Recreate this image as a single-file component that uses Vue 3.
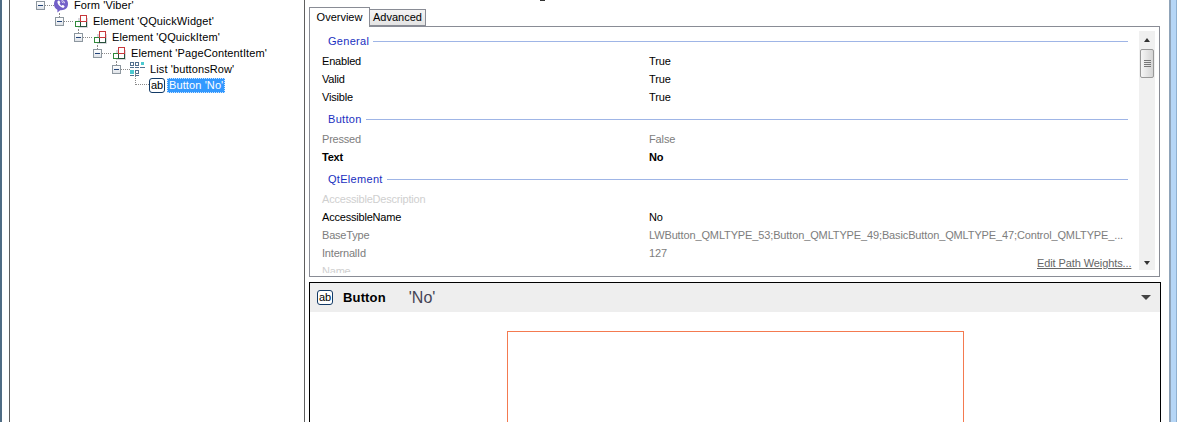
<script setup>
const treeRows = [
  { label: "Form 'Viber'", icon: 'viber', level: 0 },
  { label: "Element 'QQuickWidget'", icon: 'element', level: 1 },
  { label: "Element 'QQuickItem'", icon: 'element', level: 2 },
  { label: "Element 'PageContentItem'", icon: 'element', level: 3 },
  { label: "List 'buttonsRow'", icon: 'list', level: 4 },
  { label: "Button 'No'", icon: 'ab', level: 5, selected: true },
]
const sections = [
  {
    title: 'General',
    rows: [
      { name: 'Enabled', value: 'True' },
      { name: 'Valid', value: 'True' },
      { name: 'Visible', value: 'True' },
    ],
  },
  {
    title: 'Button',
    rows: [
      { name: 'Pressed', value: 'False', tone: 'muted' },
      { name: 'Text', value: 'No', tone: 'strong' },
    ],
  },
  {
    title: 'QtElement',
    rows: [
      { name: 'AccessibleDescription', value: '', tone: 'faint' },
      { name: 'AccessibleName', value: 'No' },
      { name: 'BaseType', value: 'LWButton_QMLTYPE_53;Button_QMLTYPE_49;BasicButton_QMLTYPE_47;Control_QMLTYPE_...', tone: 'muted' },
      { name: 'InternalId', value: '127', tone: 'muted' },
      { name: 'Name', value: '', tone: 'faint' },
    ],
  },
]
</script>

<template>
  <div class="window">
    <div class="frame-left"></div>
    <aside class="tree">
      <div
        v-for="row in treeRows"
        :key="row.label"
        class="tree-row"
        :style="{ paddingLeft: 26 + row.level * 19 + 'px' }"
      >
        <template v-if="row.level < 5">
          <span class="expander"><i></i></span>
          <span class="dots"></span>
        </template>
        <span v-else class="leaf-link"></span>

        <svg v-if="row.icon === 'viber'" class="ic ic-viber" width="16" height="18" viewBox="0 0 16 18">
          <path d="M8 0.5C3.6 0.5 1 3 1 7c0 2.800 1.200 4.700 3.400 5.700V15.500l2.800-2.300h.8c4.400 0 7-2.400 7-6.200S12.400.5 8 .5z" fill="#7360c8" />
          <path d="M5.300 3.700c.5-.3 1-.2 1.200.2l.7 1.200c.2.400.1.700-.2 1l-.4.3c.3 1 1.200 1.900 2.200 2.300l.4-.5c.3-.3.600-.3 1-.1l1.100.8c.4.300.4.700.1 1.100-.5.700-1.100 1-1.900.8C6.900 9.900 4.800 7.700 4.400 5.300c-.1-.7.300-1.200.9-1.600z" fill="#fff" />
          <path d="M8.500 3.200c1.700.1 2.900 1.300 3 3M8.600 4.600c.9.100 1.400.6 1.500 1.500" stroke="#fff" stroke-width=".8" fill="none" />
        </svg>
        <svg v-else-if="row.icon === 'element'" class="ic ic-element" width="13" height="13" viewBox="0 0 13 13">
          <rect x="3" y="3" width="10" height="10" fill="#d8d8de" />
          <rect x=".5" y="6.500" width="5" height="5" fill="#fff" stroke="#2f8a3a" />
          <rect x="5.500" y="6.500" width="6" height="5" fill="#fff" stroke="#27503a" />
          <rect x="5.500" y=".5" width="6" height="6" fill="#fff" stroke="#c8383c" />
        </svg>
        <svg v-else-if="row.icon === 'list'" class="ic ic-list" width="16" height="14" viewBox="0 0 16 14">
          <g fill="none" stroke="#52708f">
            <rect x="1.500" y=".5" width="3" height="3" />
            <rect x="6.500" y=".5" width="3" height="3" />
            <rect x="6.500" y="8.500" width="3" height="3" />
          </g>
          <rect x="12" y="0" width="3" height="3" fill="#4cc9d0" />
          <rect x="1" y="8" width="4" height="4" fill="#4cc9d0" />
          <path d="M1 5.500h4M6 5.500h4M11 5.500h5M1 13.500h4M6 13.500h4" stroke="#52708f" />
        </svg>
        <span v-else class="ab-icon">ab</span>

        <span class="tree-label" :class="{ selected: row.selected }">{{ row.label }}</span>
      </div>
    </aside>

    <main class="right">
      <div class="title-tail"></div>
      <div class="tabs">
        <div class="tab active">Overview</div>
        <div class="tab">Advanced</div>
      </div>

      <section class="panel">
        <div class="prop-list">
          <div v-for="s in sections" :key="s.title" class="prop-section">
            <div class="prop-head"><span>{{ s.title }}</span><i></i></div>
            <div v-for="r in s.rows" :key="r.name" class="prop-row" :class="r.tone">
              <span>{{ r.name }}</span>
              <span class="prop-value">{{ r.value }}</span>
            </div>
          </div>
        </div>
        <div class="scrollbar">
          <span class="arrow up"></span>
          <span class="thumb"><i></i><i></i><i></i><i></i></span>
          <span class="track"></span>
          <span class="arrow down"></span>
        </div>
        <a class="edit-link">Edit Path Weights...</a>
      </section>

      <section class="detail">
        <header class="detail-head">
          <span class="ab-icon head-ab">ab</span>
          <b class="detail-type">Button</b>
          <span class="detail-name">'No'</span>
          <span class="detail-caret"></span>
        </header>
        <div class="preview"></div>
      </section>
    </main>

    <div class="frame-right"></div>
  </div>
</template>

<style>
html, body { margin: 0; background: #fff; overflow: hidden; }
</style>

<style scoped>
.window {
  width: 1177px;
  height: 422px;
  overflow: hidden;
  display: flex;
  background: #fff;
  font: 11px/16px "Liberation Sans", Arial, sans-serif;
  color: #000;
}
.frame-left {
  width: 9px;
  flex: none;
  background: linear-gradient(to right, #4f6c84 0 2px, #fff 2px);
}
.tree {
  width: 294px;
  flex: none;
  border-left: 1px solid #5f5f5f;
  border-right: 1px solid #5f5f5f;
  box-sizing: content-box;
  margin-right: 4px;
}
.tree-row {
  height: 16px;
  display: flex;
  align-items: center;
  position: relative;
  white-space: nowrap;
}
.tree-row:first-child { margin-top: -3px; }
.expander {
  width: 9px;
  height: 9px;
  flex: none;
  box-sizing: border-box;
  border: 1px solid #8d979f;
  background: linear-gradient(#fff, #dfe3e8);
  display: flex;
  align-items: center;
  justify-content: center;
  position: relative;
}
.expander i { width: 5px; height: 1px; background: #23457a; }
.tree-row:not(:first-child) .expander::after {
  content: "";
  position: absolute;
  left: 3px;
  top: -5px;
  height: 4px;
  border-left: 1px dotted #8a8a8a;
}
.dots {
  width: 9px;
  flex: none;
  border-top: 1px dotted #8a8a8a;
}
.leaf-link {
  width: 14px;
  margin-left: 4px;
  height: 12px;
  margin-top: -12px;
  flex: none;
  border-left: 1px dotted #8a8a8a;
  border-bottom: 1px dotted #8a8a8a;
  box-sizing: border-box;
}
.ic { flex: none; display: block; }
.ic-viber { margin-left: -1px; margin-top: 2px; }
.ic-viber + .tree-label { margin-left: 4px; }
.ic-element { margin-left: 2px; }
.ic-element + .tree-label { margin-left: 4px; }
.ic-list { margin-left: -1px; }
.ic-list + .tree-label { margin-left: 4px; }
.ab-icon {
  width: 16px;
  height: 15px;
  box-sizing: border-box;
  flex: none;
  border: 1px solid #123a66;
  border-radius: 3px;
  background: #fff;
  color: #000;
  font-size: 11px;
  line-height: 13px;
  text-align: center;
}
.tree-label {
  padding: 0 1px;
  letter-spacing: 0.11px;
}
.ab-icon + .tree-label { margin-left: 2px; }
.tree-label.selected {
  background: #3399ff;
  color: #fff;
  outline: 1px dotted #cfe6ff;
  outline-offset: -1px;
  height: 15px;
  line-height: 15px;
  padding: 0 2px;
}

.right {
  width: 852px;
  flex: none;
  padding-top: 7px;
  position: relative;
}
.title-tail {
  position: absolute;
  left: 231px;
  top: 0;
  width: 5px;
  height: 1px;
  background: #333;
}
.tabs {
  display: flex;
  align-items: flex-end;
  height: 20px;
  margin-bottom: -1px;
  position: relative;
  z-index: 1;
}
.tab {
  height: 17px;
  width: 56px;
  box-sizing: border-box;
  border: 1px solid #898c95;
  border-left: none;
  background: linear-gradient(#f4f4f4, #e4e4e4);
  text-align: center;
  line-height: 15px;
  margin-bottom: 1px;
}
.tab.active {
  height: 20px;
  width: 61px;
  background: #fff;
  border-left: 1px solid #898c95;
  border-bottom: none;
  margin-bottom: 0;
  line-height: 18px;
}
.panel {
  height: 251px;
  box-sizing: border-box;
  width: 851px;
  border: 1px solid #898c95;
  position: relative;
  display: flex;
  overflow: hidden;
  padding-bottom: 3px;
}
.prop-list {
  width: 829px;
  flex: none;
  box-sizing: border-box;
  padding: 1px 11px 0 12px;
  overflow: hidden;
}
.prop-section { margin-top: 4px; }
.prop-head {
  height: 18px;
  margin-bottom: 2px;
  padding-left: 6px;
  display: flex;
  align-items: center;
  gap: 4px;
  color: #1a2fc0;
  letter-spacing: 0.3px;
}
.prop-head i { flex: 1; height: 1px; background: #9fb5e6; }
.prop-row {
  height: 18px;
  line-height: 18px;
  display: grid;
  grid-template-columns: 327px 1fr;
  white-space: nowrap;
  letter-spacing: -0.2px;
}
.prop-value { letter-spacing: -0.13px; }
.prop-row.muted { color: #7d7d7d; }
.prop-row.faint { color: #cfcfcf; }
.prop-row.strong { font-weight: 700; }
.scrollbar {
  width: 16px;
  height: 239px;
  margin-top: 4px;
  flex: none;
  background: #f0f0f0;
  display: flex;
  flex-direction: column;
  align-items: center;
}
.arrow {
  width: 0;
  height: 0;
  flex: none;
  border-left: 3.5px solid transparent;
  border-right: 3.5px solid transparent;
}
.arrow.up { border-bottom: 4px solid #333; margin: 7px 0 7px; }
.arrow.down { border-top: 4px solid #333; margin: 8px 0 5px; }
.track { flex: 1; }
.thumb {
  width: 14px;
  height: 29px;
  flex: none;
  box-sizing: border-box;
  border: 1px solid #999;
  border-radius: 2px;
  background: linear-gradient(to right, #f6f6f6, #d4d4d4);
  display: flex;
  flex-direction: column;
  align-items: center;
  justify-content: center;
  gap: 1px;
}
.thumb i { width: 7px; height: 1px; background: #777; }
.edit-link {
  position: absolute;
  left: 727px;
  top: 228px;
  line-height: 16px;
  color: #666;
  text-decoration: underline;
  white-space: nowrap;
  background: #fff;
  letter-spacing: -0.1px;
}
.detail {
  margin-top: 5px;
  width: 852px;
  height: 200px;
  box-sizing: border-box;
  border: 1px solid #000;
  overflow: hidden;
}
.detail-head {
  height: 29px;
  background: #eeeeee;
  display: flex;
  align-items: center;
  padding-left: 7px;
  position: relative;
}
.head-ab { font-size: 11px; }
.detail-type {
  margin-left: 10px;
  font-size: 13px;
  letter-spacing: 0.15px;
}
.detail-name {
  margin-left: 23px;
  font-size: 16px;
  color: #445;
}
.detail-caret {
  position: absolute;
  right: 9px;
  top: 12px;
  width: 0;
  height: 0;
  border-left: 5px solid transparent;
  border-right: 5px solid transparent;
  border-top: 5px solid #444;
}
.preview {
  width: 457px;
  height: 200px;
  box-sizing: border-box;
  margin: 19px 0 0 197px;
  border: 1px solid #f47a50;
}
.frame-right {
  flex: 1;
  background: linear-gradient(to right, #fff 0 8px, #8fa3b8 8px 10px, #b6d6f6 10px, #b6d6f6 calc(100% - 1px), #8fb0d0 calc(100% - 1px));
}
</style>
